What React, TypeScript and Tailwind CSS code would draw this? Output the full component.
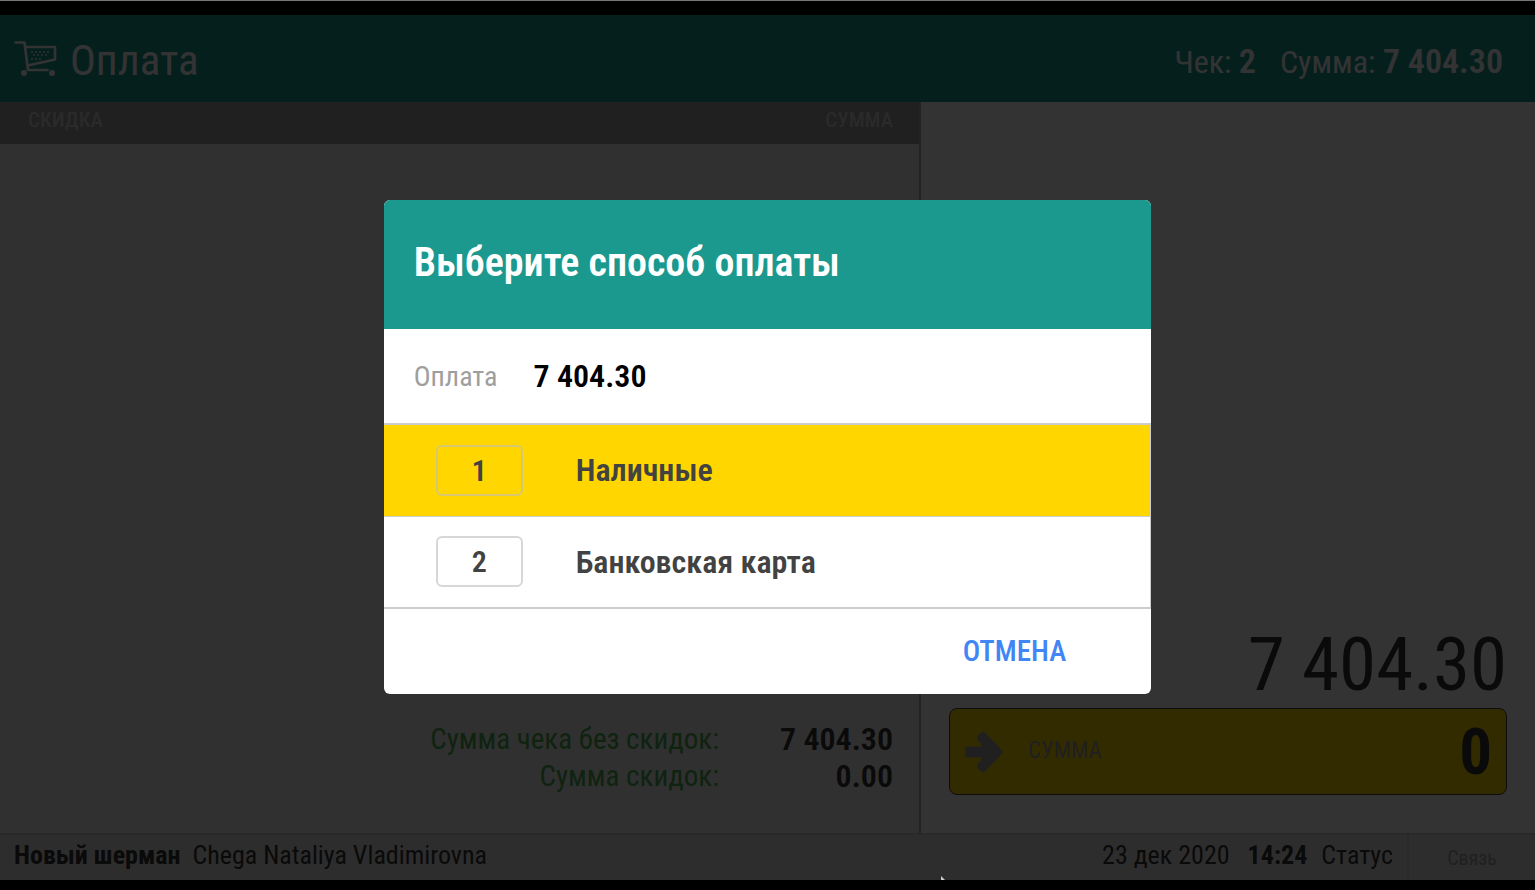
import { useState } from "react";

const paymentMethods = [
  { key: 1, title: "Наличные" },
  { key: 2, title: "Банковская карта" },
];

const totals = [
  { label: "Сумма чека без скидок:", value: "7 404.30" },
  { label: "Сумма скидок:", value: "0.00" },
];

const cartDots = [
  [18, 12], [22, 12], [26, 12], [30, 12], [34, 12],
  [20, 15], [24, 15], [28, 15], [32, 15],
  [18, 19], [22, 19], [26, 19],
];

function CartIcon() {
  return (
    <svg viewBox="0 0 44 38" className="h-[38px] w-11 flex-shrink-0" fill="none" stroke="currentColor" aria-hidden="true">
      <path
        d="M1.5 2.500H10.500L14 30H33.500M12 7H41V19.500L14 25.500"
        strokeWidth="2.6"
        strokeLinecap="round"
        strokeLinejoin="round"
      />
      <circle cx="10" cy="33" r="3" fill="currentColor" stroke="none" />
      <circle cx="38" cy="33" r="3" fill="currentColor" stroke="none" />
      {cartDots.map(([x, y]) => (
        <circle key={`${x}-${y}`} cx={x} cy={y} r="0.9" fill="currentColor" stroke="none" />
      ))}
    </svg>
  );
}

function ArrowIcon() {
  return (
    <svg viewBox="0 0 40 42" className="h-[42px] w-10 flex-shrink-0" aria-hidden="true">
      <path
        d="M3 15.5h16L13.6 9.2a3 3 0 0 1 0-4l3-3.4a3 3 0 0 1 4.4 0L38 19.2a2.8 2.8 0 0 1 0 3.6L21 40.2a3 3 0 0 1-4.4 0l-3-3.4a3 3 0 0 1 0-4L19 26.5H3a2 2 0 0 1-2-2v-7a2 2 0 0 1 2-2z"
        fill="currentColor"
      />
    </svg>
  );
}

function PaymentDialog() {
  const [selected, setSelected] = useState(1);

  return (
    <div className="absolute inset-0 flex items-center justify-center bg-black/80 pb-[2px]">
      <div
        role="dialog"
        aria-labelledby="dialog-title"
        className="w-1/2 rounded-md bg-white"
      >
        <h2 id="dialog-title" className="rounded-t-md bg-[#1b998f] px-[30px] pt-[38px] pb-[42px] text-[40px] leading-[49px] font-semibold text-white">
          Выберите способ оплаты
        </h2>
        <div className="flex h-24 items-center gap-9 border-b-2 border-[#cccccc] px-[30px]">
          <span className="pt-[2px] text-[28px] text-[#9e9e9e]">Оплата</span>
          <span className="text-[32px] font-semibold text-black">7 404.30</span>
        </div>
        {paymentMethods.map((method) => (
          <button
            key={method.key}
            onClick={() => setSelected(method.key)}
            className={`flex h-[92px] w-full items-center gap-[53px] border-r border-b border-[#cccccc] pl-[52px] text-[32px] font-semibold text-[#424242] last-of-type:border-b-2 ${
              selected === method.key ? "bg-[#ffd600]" : "bg-white"
            }`}
          >
            <span className="flex h-[51px] w-[87px] items-center justify-center rounded-md border-2 border-[#bdbdbd]/60 text-[30px]">
              {method.key}
            </span>
            {method.title}
          </button>
        ))}
        <div className="flex h-[85px] items-center justify-end pt-[2px] pr-[85px]">
          <button className="text-[29px] font-medium text-[#4285f4]">ОТМЕНА</button>
        </div>
      </div>
    </div>
  );
}

export default function App() {
  const [amount, setAmount] = useState("0");

  return (
    <div className="flex h-screen flex-col border-t border-[#777777] bg-black pt-[14px] pb-[10px] font-['Roboto_Condensed',Roboto,sans-serif]">
      <div className="relative flex min-h-0 flex-1 flex-col bg-[#eeeeee] text-[#333333]">
        <header className="flex h-[87px] flex-shrink-0 items-center justify-between bg-[#1b998f] pr-8 pl-[14px] text-white">
          <div className="flex items-center gap-3">
            <CartIcon />
            <h1 className="pt-1 text-[43px]">Оплата</h1>
          </div>
          <div className="flex items-baseline gap-6 pt-[6px] text-[32px]">
            <span>
              Чек: <b className="text-[34px] font-semibold">2</b>
            </span>
            <span>
              Сумма: <b className="text-[34px] font-semibold">7 404.30</b>
            </span>
          </div>
        </header>

        <main className="flex min-h-0 flex-1">
          <section className="flex w-3/5 flex-shrink-0 flex-col justify-between border-r-2 border-[#b0b0b0]">
            <table className="w-full bg-[#9e9e9e] text-[21px] text-[#d0d0d0]">
              <thead>
                <tr className="h-[42px]">
                  <th className="pb-1 pl-7 text-left font-medium">СКИДКА</th>
                  <th className="pr-[26px] pb-1 text-right font-medium">СУММА</th>
                </tr>
              </thead>
            </table>
            <dl className="grid grid-cols-[1fr_174px] pr-[26px] pb-[38px] text-right leading-[37px]">
              {totals.map((row) => (
                <div key={row.label} className="contents">
                  <dt className="text-[29px] text-[#4caf50]">{row.label}</dt>
                  <dd className="text-[32px] font-semibold">{row.value}</dd>
                </div>
              ))}
            </dl>
          </section>

          <section className="flex min-w-0 flex-1 flex-col justify-end bg-white px-7 pb-[38px]">
            <div className="text-right text-[75px] leading-[88px]">7 404.30</div>
            <div className="flex h-[87px] items-center rounded-lg border border-[#424242] bg-[#ffd600] px-[14px]">
              <span className="text-[#9e9e9e]">
                <ArrowIcon />
              </span>
              <label htmlFor="amount" className="pl-6 text-[23px] text-[#9e9e9e]">
                СУММА
              </label>
              <input
                id="amount"
                value={amount}
                onChange={(e) => setAmount(e.target.value)}
                className="min-w-0 flex-1 bg-transparent pt-[2px] text-right text-[65px] font-bold outline-none"
              />
            </div>
          </section>
        </main>

        <footer className="flex h-[47px] flex-shrink-0 items-center justify-between border-t-2 border-[#cccccc] bg-[#e0e0e0] pl-[14px] text-[26px]">
          <div className="flex gap-3 pb-1">
            <b>Новый шерман</b>
            <span>Chega Nataliya Vladimirovna</span>
          </div>
          <div className="flex h-full items-center">
            <span className="pb-1">23 дек 2020</span>
            <b className="pb-1 pl-[18px]">14:24</b>
            <span className="px-[14px] pb-1">Статус</span>
            <button className="h-full w-32 border-l-2 border-[#cccccc] text-[20px] text-[#9e9e9e]">Связь</button>
          </div>
        </footer>

        <PaymentDialog />
        {/* tip of the mouse pointer */}
        <svg viewBox="0 0 4 4" className="absolute bottom-0 left-[941px] h-1 w-1" aria-hidden="true">
          <path d="M0 0l4 4H0z" fill="#cccccc" />
        </svg>
      </div>
    </div>
  );
}
